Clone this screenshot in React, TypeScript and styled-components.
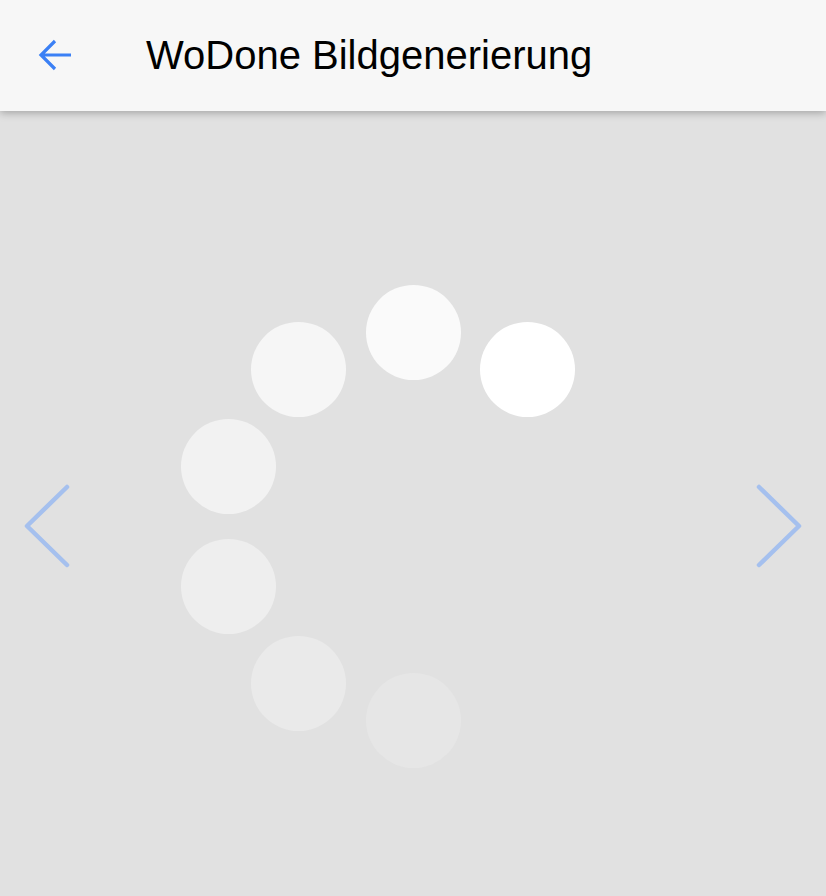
import React, { FC } from 'react'
import styled, { createGlobalStyle } from 'styled-components'

const STYLE_BG = '#e1e1e1'
const STYLE_HEADER_BG = '#f7f7f7'
const STYLE_ACCENT = '#3b80f5'
const STYLE_CHEVRON = '#a5c0ee'

const GlobalStyle = createGlobalStyle`
  html, body {
    margin: 0;
    padding: 0;
    background: ${STYLE_BG};
  }
  #root {
    min-height: 100vh;
  }
`

const Screen = styled.div`
  display: flex;
  flex-direction: column;
  width: 826px;
  height: 896px;
  background: ${STYLE_BG};
  font-family: 'Liberation Sans', Arial, sans-serif;
  overflow: hidden;
`
const Header = styled.header`
  position: relative;
  z-index: 1;
  display: flex;
  align-items: center;
  flex: 0 0 111px;
  padding-left: 38px;
  background: ${STYLE_HEADER_BG};
  box-shadow: 0 2px 8px rgba(0, 0, 0, 0.28);
`
const BackButton = styled.button`
  display: flex;
  padding: 0;
  border: 0;
  background: none;
  margin-top: -2px;
  cursor: pointer;
`
const Title = styled.h1`
  margin: 0 0 0 74px;
  font-size: 40px;
  font-weight: 400;
  color: #000;
`
const Stage = styled.main`
  flex: 1;
  display: grid;
  grid-template-columns: 50px 1fr 50px;
  align-items: center;
  padding: 46px 22px 0 22px;
`
const NavButton = styled.button`
  display: flex;
  padding: 0;
  border: 0;
  background: none;
  cursor: pointer;
`
const Spinner = styled.div`
  position: relative;
  justify-self: center;
  width: 483px;
  height: 483px;
`
const Dot = styled.span<{ shade: string }>`
  position: absolute;
  width: 95px;
  height: 95px;
  border-radius: 50%;
  background: ${p => p.shade};
`

const RING_RADIUS = 194
const SPINNER_HALF = 241.5
const DOTS = [
  { angle: 36, shade: '#ffffff' },
  { angle: 0, shade: '#fafafa' },
  { angle: -36, shade: '#f6f6f6' },
  { angle: -72, shade: '#f2f2f2' },
  { angle: -108, shade: '#eeeeee' },
  { angle: -144, shade: '#eaeaea' },
  { angle: -180, shade: '#e6e6e6' },
]

const Chevron: FC<{ dir: 'left' | 'right' }> = ({ dir }) => (
  <svg width="50" height="90" viewBox="0 0 50 90" fill="none">
    <path
      d={dir === 'left' ? 'M45 5 L5 44 L45 83' : 'M5 5 L45 44 L5 83'}
      stroke={STYLE_CHEVRON}
      strokeWidth="4.5"
      strokeLinecap="round"
      strokeLinejoin="round"
    />
  </svg>
)

const App: FC = () => (
  <Screen>
    <GlobalStyle />
    <Header>
      <BackButton aria-label="Zurück">
        <svg width="34" height="34" viewBox="0 0 34 34" fill="none">
          <path
            d="M33 17 H4 M17 3 L3 17 L17 31"
            stroke={STYLE_ACCENT}
            strokeWidth="3.2"
            strokeLinejoin="miter"
          />
        </svg>
      </BackButton>
      <Title>WoDone Bildgenerierung</Title>
    </Header>
    <Stage>
      <NavButton aria-label="Zurück">
        <Chevron dir="left" />
      </NavButton>
      <Spinner>
        {DOTS.map(({ angle, shade }) => {
          const rad = (angle * Math.PI) / 180
          const cx = SPINNER_HALF + RING_RADIUS * Math.sin(rad)
          const cy = SPINNER_HALF - RING_RADIUS * Math.cos(rad)
          return <Dot key={angle} shade={shade} style={{ left: cx - 47.5, top: cy - 47.5 }} />
        })}
      </Spinner>
      <NavButton aria-label="Weiter">
        <Chevron dir="right" />
      </NavButton>
    </Stage>
  </Screen>
)

export default App
